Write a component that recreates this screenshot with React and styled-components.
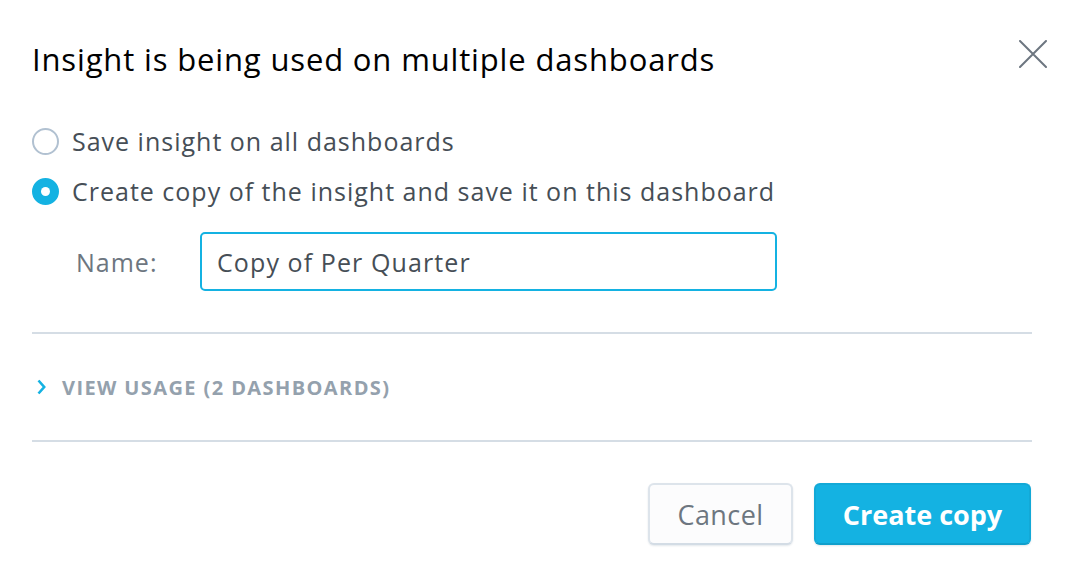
import React from "react";
import styled, { createGlobalStyle } from "styled-components";

const FONT = `"Open Sans", "Noto Sans", sans-serif`;

const Global = createGlobalStyle`
  html, body { margin: 0; padding: 0; background: #fff; }
  body { font-family: ${FONT}; -webkit-font-smoothing: antialiased; }
  * { box-sizing: border-box; }
`;

const Dialog = styled.div`
  position: relative;
  width: 1066px;
  height: 584px;
  padding: 37px 34px 0 32px;
  background: #fff;
`;

const Title = styled.h1`
  margin: 0;
  font-size: 31px;
  line-height: 44px;
  font-weight: 400;
  letter-spacing: 0.85px;
  color: #000;
`;

const Close = styled.button`
  position: absolute;
  top: 40px;
  right: 19px;
  width: 28px;
  height: 28px;
  padding: 0;
  border: 0;
  background: none;
  cursor: pointer;
  svg { display: block; }
`;

const RadioList = styled.div`
  margin-top: 40px;
  display: flex;
  flex-direction: column;
  gap: 10px;
`;

const RadioRow = styled.label`
  display: flex;
  align-items: center;
  height: 40px;
  gap: 13px;
  font-size: 25px;
  letter-spacing: 1px;
  color: #464e56;
  cursor: pointer;
`;

const RadioDot = styled.span`
  width: 27px;
  height: 27px;
  border-radius: 50%;
  flex: none;
  display: flex;
  align-items: center;
  justify-content: center;
  border: 2px solid ${(p) => (p.$checked ? "#14b2e2" : "#b1c1d1")};
  background: ${(p) => (p.$checked ? "#14b2e2" : "#fff")};
  &::after {
    content: "";
    width: 9px;
    height: 9px;
    border-radius: 50%;
    background: #fff;
    display: ${(p) => (p.$checked ? "block" : "none")};
  }
`;

const NameRow = styled.div`
  margin-top: 21px;
  display: flex;
  align-items: center;
  padding-left: 44px;
`;

const NameLabel = styled.span`
  width: 124px;
  font-size: 25px;
  letter-spacing: 1px;
  color: #6d7680;
`;

const Input = styled.input`
  width: 577px;
  height: 59px;
  padding: 0 15px;
  border: 2px solid #14b2e2;
  border-radius: 5px;
  font-family: ${FONT};
  font-size: 25px;
  letter-spacing: 1.1px;
  color: #464e56;
  outline: none;
`;

const Divider = styled.hr`
  margin: 0;
  margin-top: ${(p) => p.$top || 0}px;
  border: 0;
  height: 2px;
  background: #d5dde5;
`;

const Usage = styled.div`
  height: 106px;
  display: flex;
  align-items: center;
  gap: 16px;
  padding-left: 5px;
  font-size: 20px;
  font-weight: 700;
  letter-spacing: 1.4px;
  color: #94a1ad;
  text-transform: uppercase;
  svg { display: block; }
`;

const Footer = styled.div`
  margin-top: 41px;
  display: flex;
  justify-content: flex-end;
  gap: 21px;
  padding-right: 1px;
`;

const Button = styled.button`
  height: 62px;
  padding: 0 20px;
  min-width: ${(p) => (p.$primary ? 217 : 145)}px;
  border-radius: 6px;
  font-family: ${FONT};
  font-size: 27px;
  letter-spacing: ${(p) => (p.$primary ? 0 : 0.4)}px;
  font-weight: ${(p) => (p.$primary ? 700 : 400)};
  color: ${(p) => (p.$primary ? "#fff" : "#6d7680")};
  background: ${(p) => (p.$primary ? "#14b2e2" : "#fcfcfd")};
  border: 2px solid ${(p) => (p.$primary ? "#13a9d7" : "#dde4eb")};
  border-bottom-color: ${(p) => (p.$primary ? "#109fcb" : "#d3dce5")};
  box-shadow: 0 1px 2px rgba(20, 56, 93, 0.12);
  cursor: pointer;
`;

export default function App() {
  return (
    <>
      <Global />
      <Dialog>
        <Title>Insight is being used on multiple dashboards</Title>
        <Close aria-label="Close">
          <svg width="28" height="28" viewBox="0 0 28 28">
            <path d="M1 1 L27 27 M27 1 L1 27" stroke="#6d7680" strokeWidth="2" strokeLinecap="round" />
          </svg>
        </Close>
        <RadioList>
          <RadioRow>
            <RadioDot />
            Save insight on all dashboards
          </RadioRow>
          <RadioRow>
            <RadioDot $checked />
            Create copy of the insight and save it on this dashboard
          </RadioRow>
        </RadioList>
        <NameRow>
          <NameLabel>Name:</NameLabel>
          <Input defaultValue="Copy of Per Quarter" />
        </NameRow>
        <Divider $top={41} />
        <Usage>
          <svg width="9" height="16" viewBox="0 0 9 16">
            <path d="M1.5 1.5 L7.2 8 L1.5 14.5" fill="none" stroke="#14b2e2" strokeWidth="2.6" />
          </svg>
          View usage (2 dashboards)
        </Usage>
        <Divider />
        <Footer>
          <Button>Cancel</Button>
          <Button $primary>Create copy</Button>
        </Footer>
      </Dialog>
    </>
  );
}
